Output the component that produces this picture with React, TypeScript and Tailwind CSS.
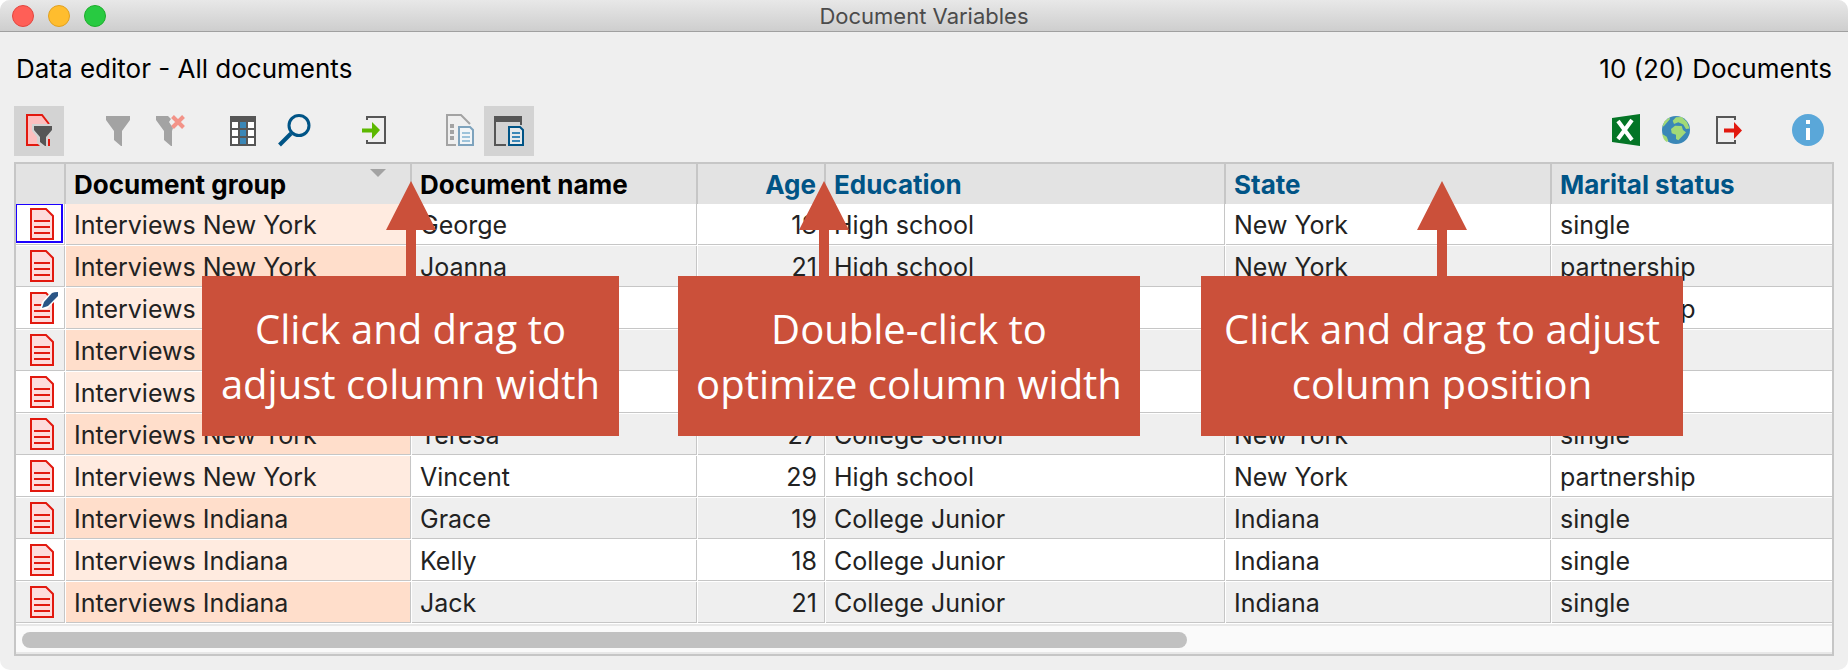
import type { ReactNode } from "react";
import { clsx } from "clsx";

interface DocumentRow {
  group: string;
  name: string;
  age: number;
  education: string;
  state: string;
  marital: string;
  edited?: boolean;
}

const rows: DocumentRow[] = [
  { group: "Interviews New York", name: "George", age: 18, education: "High school", state: "New York", marital: "single" },
  { group: "Interviews New York", name: "Joanna", age: 21, education: "High school", state: "New York", marital: "partnership" },
  { group: "Interviews New York", name: "Milton", age: 20, education: "High school", state: "New York", marital: "partnership", edited: true },
  { group: "Interviews New York", name: "Robyn", age: 22, education: "High school", state: "New York", marital: "single" },
  { group: "Interviews New York", name: "Sheila", age: 19, education: "High school", state: "New York", marital: "single" },
  { group: "Interviews New York", name: "Teresa", age: 27, education: "College Senior", state: "New York", marital: "single" },
  { group: "Interviews New York", name: "Vincent", age: 29, education: "High school", state: "New York", marital: "partnership" },
  { group: "Interviews Indiana", name: "Grace", age: 19, education: "College Junior", state: "Indiana", marital: "single" },
  { group: "Interviews Indiana", name: "Kelly", age: 18, education: "College Junior", state: "Indiana", marital: "single" },
  { group: "Interviews Indiana", name: "Jack", age: 21, education: "College Junior", state: "Indiana", marital: "single" },
];

function ToolButton({ label, active, children }: { label: string; active?: boolean; children: ReactNode }) {
  return (
    <button type="button" aria-label={label} className={clsx("size-[50px]", active && "bg-[#d3d3d3]")}>
      <svg viewBox="0 0 50 50" className="size-full" fill="none">
        {children}
      </svg>
    </button>
  );
}

function DocumentIcon({ edited }: { edited?: boolean }) {
  return (
    <svg viewBox="0 0 28 32" className="block h-8 w-7" fill="none">
      <path d="M1 1h15l7 7v23H1z" fill="#fddcdc" stroke="#e2190f" strokeWidth="2" />
      <path d="M4 13h16M4 19h16M4 25h16" stroke="#e2190f" strokeWidth="2" />
      {edited && (
        <>
          <path d="M10 17l2-7 7-8 3-2h6v6L17 17z" fill="#fff" />
          <path d="M12 16l2-6L22 1q2-1 6-1v4l-10 10z" fill="#2a5586" />
        </>
      )}
    </svg>
  );
}

function Callout({ className, arrow, children }: { className: string; arrow: string; children: ReactNode }) {
  return (
    <div className={clsx("absolute flex h-40 items-center justify-center bg-[#cb503a] text-center", className)}>
      <svg viewBox="0 0 50 96" className={clsx("absolute bottom-full h-24 w-[50px]", arrow)}>
        <path d="M25 1l25 49H30v46H20V50H0z" fill="#cb503a" />
      </svg>
      <p className="whitespace-nowrap font-['Open_Sans',sans-serif] text-[40px] leading-[55px] text-white">{children}</p>
    </div>
  );
}

const th = "h-10 border-r-2 border-[#c6c6c6] bg-[#e3e3e3] px-2 pt-0.5 pb-0 font-bold last:border-r-0";
// grey grid line inside the cell, white one outside it
const td = "border-r border-b border-white px-2 pt-0.5 pb-0 shadow-[inset_-1px_-1px_0_#c6c6c6] last:border-r-0 last:shadow-[inset_0_-1px_0_#c6c6c6]";

export default function App() {
  return (
    <div className="overflow-hidden rounded-[10px] bg-[#efefef] pb-[14px] font-['Inter',sans-serif] text-black">
      {/* Title bar */}
      <header className="relative flex h-8 items-center justify-center border-b border-[#a0a0a0] bg-linear-to-b from-[#e8e8e8] to-[#cecece]">
        <div className="absolute left-3 flex gap-[14px]">
          <button type="button" aria-label="Close" className="size-[22px] rounded-full border border-[#e2463f] bg-[#ff5f57]" />
          <button type="button" aria-label="Minimize" className="size-[22px] rounded-full border border-[#e0a020] bg-[#ffbd2e]" />
          <button type="button" aria-label="Zoom" className="size-[22px] rounded-full border border-[#1dad2b] bg-[#28ca41]" />
        </div>
        <h1 className="text-[22px] leading-8 text-[#4b4b4b]">Document Variables</h1>
      </header>

      <div className="px-[14px]">
        <div className="flex h-[74px] items-center justify-between px-0.5 pb-0.5 text-[26px]">
          <h2>Data editor - All documents</h2>
          <span>10 (20) Documents</span>
        </div>

        {/* Toolbar */}
        <div className="mb-1.5 flex justify-between">
          <div className="flex gap-[30px]">
            <ToolButton label="Only activated documents" active>
              <path d="M35 19V18L28 10H13v29h22V18z" fill="#fdbfbf" />
              <path d="M35 18L28 9H13v30h14M35 34v6" stroke="#e2190f" strokeWidth="2" />
              <path d="M18 18h22v6l-6 7v12h-5l-6-6v-6l-5-6z" fill="#d3d3d3" />
              <path d="M20 20h18v4l-6 7v9h-1l-5-4v-5l-6-7z" fill="#565656" />
              <path d="M34 33h2v7h-2z" fill="#e2190f" />
            </ToolButton>
            <div className="flex">
              <ToolButton label="Filter">
                <path d="M12 10h24v4l-8 11v15h-1l-7-6v-9l-8-11z" fill="#a3a3a3" />
              </ToolButton>
              <ToolButton label="Reset filters">
                <path d="M12 10h12l3 3-2 3 4 6-1 3v15h-1l-7-6v-9l-8-11z" fill="#a3a3a3" />
                <path d="M28.500 10.500l11 11M39.500 10.500l-11 11" stroke="#f39388" strokeWidth="4" />
              </ToolButton>
            </div>
            <div className="flex">
              <ToolButton label="List of variables">
                <path d="M6 10h26v30H6z" fill="#565656" />
                <path d="M8 16h6v6H8zM24 16h6v6h-6zM8 24h6v6H8zM24 24h6v6h-6zM8 32h6v6H8zM24 32h6v6h-6z" fill="#fff" />
                <path d="M16 16h6v6h-6zM16 24h6v6h-6zM16 32h6v6h-6z" fill="#3a87b7" />
              </ToolButton>
              <ToolButton label="Search">
                <circle cx="25" cy="19.500" r="10" stroke="#005486" strokeWidth="3" />
                <path d="M17 27.500L5.500 39" stroke="#005486" strokeWidth="4" />
              </ToolButton>
            </div>
            <ToolButton label="Import">
              <path d="M13 14v-3h18v26H13v-3" stroke="#565656" strokeWidth="2" />
              <path d="M8 22.500h10V16l8 8-8 9v-6.500H8z" fill="#5cb800" />
            </ToolButton>
            <div className="flex">
              <ToolButton label="Variable view">
                <path d="M22 39H13V9h14l9 9" stroke="#a3a3a3" strokeWidth="2" />
                <path d="M16 18h4v4h-4zM16 24h4v4h-4zM16 30h4v4h-4z" fill="#a3a3a3" />
                <path d="M25 21h11l3 3v15H25z" fill="#f2f5f7" stroke="#7ea3bd" strokeWidth="2" />
                <path d="M28 27h8M28 31h8M28 35h8" stroke="#9dc3da" strokeWidth="2" />
              </ToolButton>
              <ToolButton label="Data editor" active>
                <path d="M10 10h28v9h-2v-3H12v22h10v2H10z" fill="#565656" />
                <path d="M25 21h11l3 3v15H25z" fill="#e6e9eb" stroke="#005486" strokeWidth="2" />
                <path d="M28 27h8M28 31h8M28 35h8" stroke="#3a87b7" strokeWidth="2" />
              </ToolButton>
            </div>
          </div>

          <div className="flex gap-[30px]">
            <div className="flex">
              <ToolButton label="Open as Excel table">
                <path d="M8 12l28-4v32L8 36z" fill="#047526" />
                <path d="M14 15l14 19M28 14L14 33" stroke="#fff" strokeWidth="4" />
              </ToolButton>
              <ToolButton label="Open as HTML">
                <circle cx="22" cy="24" r="14" fill="#3a87b7" />
                <path
                  d="M8.300 21l2-5.500 5-4 .7 1.500-6 7zM18.700 14.700L22 11.300l5.700-.3 5.300 5 2.500 6.500-3.500.5-2.700-4.500-5-2.200L20 18zM17 23l4-3.300 6.700.3 1.300 4 3 2.300-3.300 3.400-4.400 4.600-2.300-1.300v-4.300l-4.300-1.400zM8.300 28l4.400 2.700 1.600 4-1.600 1.300q-4-3-4.400-8z"
                  fill="#a2d977"
                />
              </ToolButton>
              <ToolButton label="Export">
                <path d="M31 14v-3H13v26h18v-3" stroke="#565656" strokeWidth="2" />
                <path d="M20 22.500h10V16l8 8.500-8 8.500v-6.500H20z" fill="#e2190f" />
              </ToolButton>
            </div>
            <ToolButton label="Information">
              <circle cx="24" cy="24" r="16" fill="#5aa7d9" />
              <path d="M22 14h4v4h-4zM22 22h4v12h-4z" fill="#fff" />
            </ToolButton>
          </div>
        </div>

        {/* Data table */}
        <div className="relative border-2 border-[#c6c6c6] bg-white">
          <table className="w-full table-fixed border-separate border-spacing-0 text-left text-[25px] leading-[39px] text-[#222]">
            <colgroup>
              <col className="w-[50px]" />
              <col className="w-[346px]" />
              <col className="w-[286px]" />
              <col className="w-32" />
              <col className="w-[400px]" />
              <col className="w-[326px]" />
              <col />
            </colgroup>
            <thead>
              <tr className="text-[26px] leading-[38px] text-[#005486]">
                <th className={th} aria-label="Document" />
                <th className={clsx(th, "relative text-black")}>
                  Document group
                  <svg viewBox="0 0 16 8" className="absolute top-[5px] right-6 h-2 w-4">
                    <path d="M0 0h16L8 8z" fill="#a3a3a3" />
                  </svg>
                </th>
                <th className={clsx(th, "text-black")}>Document name</th>
                <th className={clsx(th, "text-right")}>Age</th>
                <th className={th}>Education</th>
                <th className={th}>State</th>
                <th className={th}>Marital status</th>
              </tr>
            </thead>
            <tbody>
              {rows.map((row, i) => {
                const even = i % 2 === 1;
                const cell = clsx(td, even && "bg-[#efefef]");
                return (
                  <tr key={row.name}>
                    <td className={clsx(cell, "relative")}>
                      {i === 0 && <div className="absolute top-0 right-0.5 bottom-0.5 left-0 border-t border-r-2 border-b-2 border-l border-[#1a00ff]" />}
                      <div className="pt-0.5 pb-[5px] pl-1.5">
                        <DocumentIcon edited={row.edited} />
                      </div>
                    </td>
                    <td className={clsx(td, even ? "bg-[#ffdecb]" : "bg-[#ffebe0]")}>{row.group}</td>
                    <td className={cell}>{row.name}</td>
                    <td className={clsx(cell, "text-right")}>{row.age}</td>
                    <td className={cell}>{row.education}</td>
                    <td className={cell}>{row.state}</td>
                    <td className={cell}>{row.marital}</td>
                  </tr>
                );
              })}
            </tbody>
          </table>

          {/* Horizontal scrollbar */}
          <div className="border-y-2 border-[#e8e8e8] bg-[#fafafa] px-1.5 pt-1.5 pb-1">
            <div className="h-4 w-[64.6%] rounded-full bg-[#c1c1c1]" />
          </div>

          <Callout className="top-28 left-[186px] w-[417px]" arrow="left-[184px]">
            Click and drag to
            <br />
            adjust column width
          </Callout>
          <Callout className="top-28 left-[662px] w-[462px]" arrow="left-[121px]">
            Double-click to
            <br />
            optimize column width
          </Callout>
          <Callout className="top-28 left-[1185px] w-[482px]" arrow="left-[216px]">
            Click and drag to adjust
            <br />
            column position
          </Callout>
        </div>
      </div>
    </div>
  );
}
